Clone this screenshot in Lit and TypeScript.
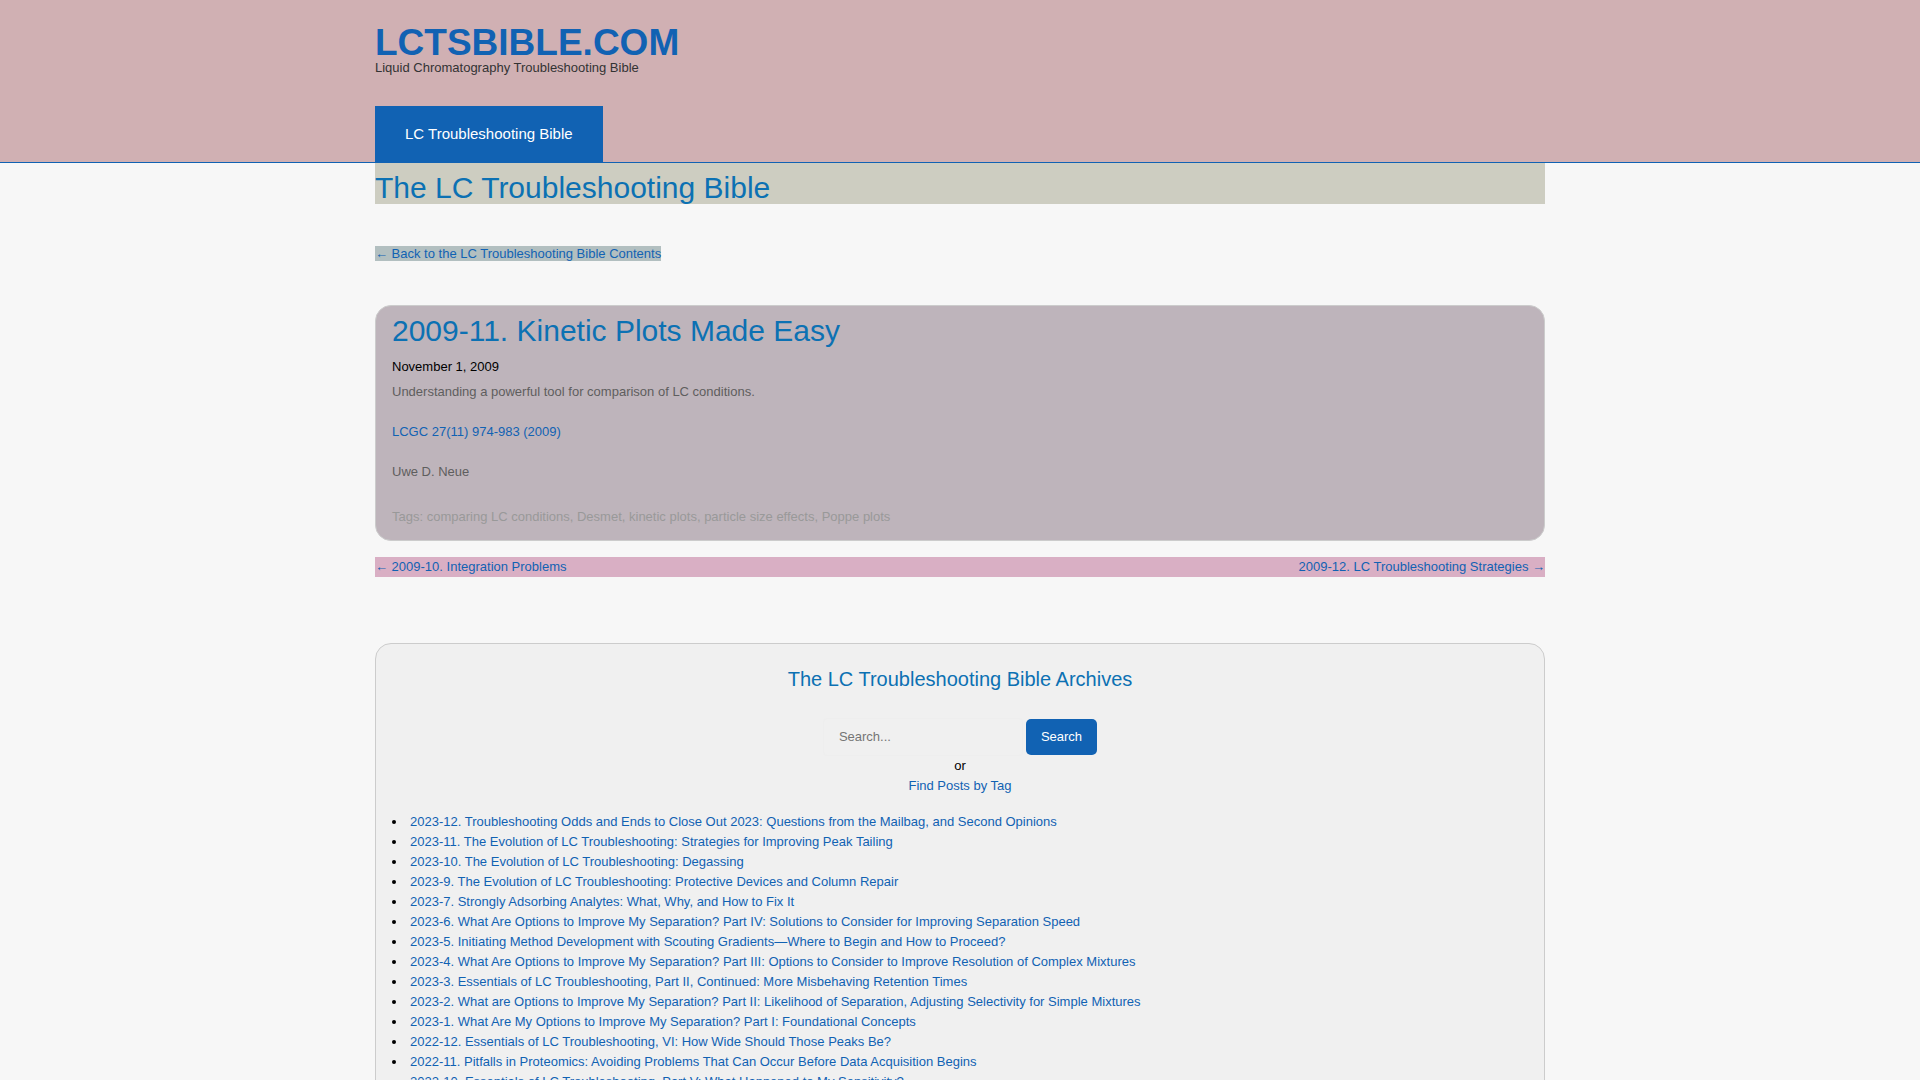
import { LitElement, html, css } from "lit";
import { customElement } from "lit/decorators.js";

const POSTS = [
  "2023-12. Troubleshooting Odds and Ends to Close Out 2023: Questions from the Mailbag, and Second Opinions",
  "2023-11. The Evolution of LC Troubleshooting: Strategies for Improving Peak Tailing",
  "2023-10. The Evolution of LC Troubleshooting: Degassing",
  "2023-9. The Evolution of LC Troubleshooting: Protective Devices and Column Repair",
  "2023-7. Strongly Adsorbing Analytes: What, Why, and How to Fix It",
  "2023-6. What Are Options to Improve My Separation? Part IV: Solutions to Consider for Improving Separation Speed",
  "2023-5. Initiating Method Development with Scouting Gradients—Where to Begin and How to Proceed?",
  "2023-4. What Are Options to Improve My Separation? Part III: Options to Consider to Improve Resolution of Complex Mixtures",
  "2023-3. Essentials of LC Troubleshooting, Part II, Continued: More Misbehaving Retention Times",
  "2023-2. What are Options to Improve My Separation? Part II: Likelihood of Separation, Adjusting Selectivity for Simple Mixtures",
  "2023-1. What Are My Options to Improve My Separation? Part I: Foundational Concepts",
  "2022-12. Essentials of LC Troubleshooting, VI: How Wide Should Those Peaks Be?",
  "2022-11. Pitfalls in Proteomics: Avoiding Problems That Can Occur Before Data Acquisition Begins",
  "2022-10. Essentials of LC Troubleshooting, Part V: What Happened to My Sensitivity?",
];

@customElement("app-root")
export class AppRoot extends LitElement {
  static styles = css`
    :host {
      display: block;
      min-height: 100vh;
      background: #f7f7f7;
      color: #000;
      font: 13px/20px "Liberation Sans", Arial, sans-serif;
    }
    * { box-sizing: border-box; }
    h1, h2, h3, p, ul { margin: 0; padding: 0; font-weight: 400; }
    a { color: #1162b3; text-decoration: none; }
    .wrap { max-width: 1170px; margin: 0 auto; }
    .header { background: #d0b0b3; border-bottom: 1px solid #1162b3; padding-top: 28px; }
    .brand { display: block; font-size: 37px; line-height: 30px; font-weight: 700; }
    .tagline { color: #333; margin-bottom: 28px; }
    .menu { display: flex; }
    .tab { background: #1162b3; color: #fff; font-size: 15px; line-height: 20px; padding: 18px 30px; }
    .title { background: #cdcdc1; color: #0c71b3; font-size: 30px; line-height: 33px; padding-top: 8px; }
    .back { margin: 40px 0 41px; }
    .back-link { background: #b2bfc0; }
    .card { border: 1px solid #ccc; border-radius: 16px; padding: 8px 16px 13px; }
    .post { background: #beb4bb; }
    .post-title { color: #0c71b3; font-size: 30px; line-height: 33px; margin-bottom: 10px; }
    .body { color: #5e5e5e; margin: 5px 0 25px; display: grid; gap: 20px; }
    .tags { color: #999; }
    .pager { background: #d9afc4; display: flex; justify-content: space-between; margin: 16px 0 66px; }
    .archive { background: #f0f0f0; padding-top: 24px; }
    .center { text-align: center; }
    .archive-title { color: #0c71b3; font-size: 20px; line-height: 22px; margin-bottom: 28px; }
    .search { display: flex; justify-content: center; align-items: center; gap: 3px; }
    .field {
      width: 200px; height: 38px; padding: 0 15px 1px; font: inherit; color: #444;
      background: #f0f0f0; border: 1px solid #eee; border-radius: 4px;
    }
    .field::placeholder { color: #757575; opacity: 1; }
    .submit {
      height: 36px; padding: 0 15px; font: inherit; color: #fff;
      background: #1162b3; border: 0; border-radius: 5px;
    }
    .list { margin-top: 16px; list-style: disc inside; }
  `;

  render() {
    return html`
      <header class="header">
        <div class="wrap">
          <a class="brand" href="#">LCTSBIBLE.COM</a>
          <p class="tagline">Liquid Chromatography Troubleshooting Bible</p>
          <nav class="menu"><a class="tab" href="#">LC Troubleshooting Bible</a></nav>
        </div>
      </header>
      <main class="wrap">
        <h1 class="title">The LC Troubleshooting Bible</h1>
        <p class="back"><a class="back-link" href="#">← Back to the LC Troubleshooting Bible Contents</a></p>
        <article class="card post">
          <h2 class="post-title">2009-11. Kinetic Plots Made Easy</h2>
          <p>November 1, 2009</p>
          <div class="body">
            <p>Understanding a powerful tool for comparison of LC conditions.</p>
            <p><a href="#">LCGC 27(11) 974-983 (2009)</a></p>
            <p>Uwe D. Neue</p>
          </div>
          <p class="tags">Tags: comparing LC conditions, Desmet, kinetic plots, particle size effects, Poppe plots</p>
        </article>
        <nav class="pager">
          <a href="#">← 2009-10. Integration Problems</a>
          <a href="#">2009-12. LC Troubleshooting Strategies →</a>
        </nav>
        <section class="card archive">
          <div class="center">
            <h3 class="archive-title">The LC Troubleshooting Bible Archives</h3>
            <form class="search" @submit=${(e: Event) => e.preventDefault()}>
              <input class="field" type="search" placeholder="Search..." aria-label="Search" />
              <button class="submit" type="submit">Search</button>
            </form>
            <p>or</p>
            <p><a href="#">Find Posts by Tag</a></p>
          </div>
          <ul class="list">
            ${POSTS.map((post) => html`<li><a href="#">${post}</a></li>`)}
          </ul>
        </section>
      </main>
    `;
  }
}
